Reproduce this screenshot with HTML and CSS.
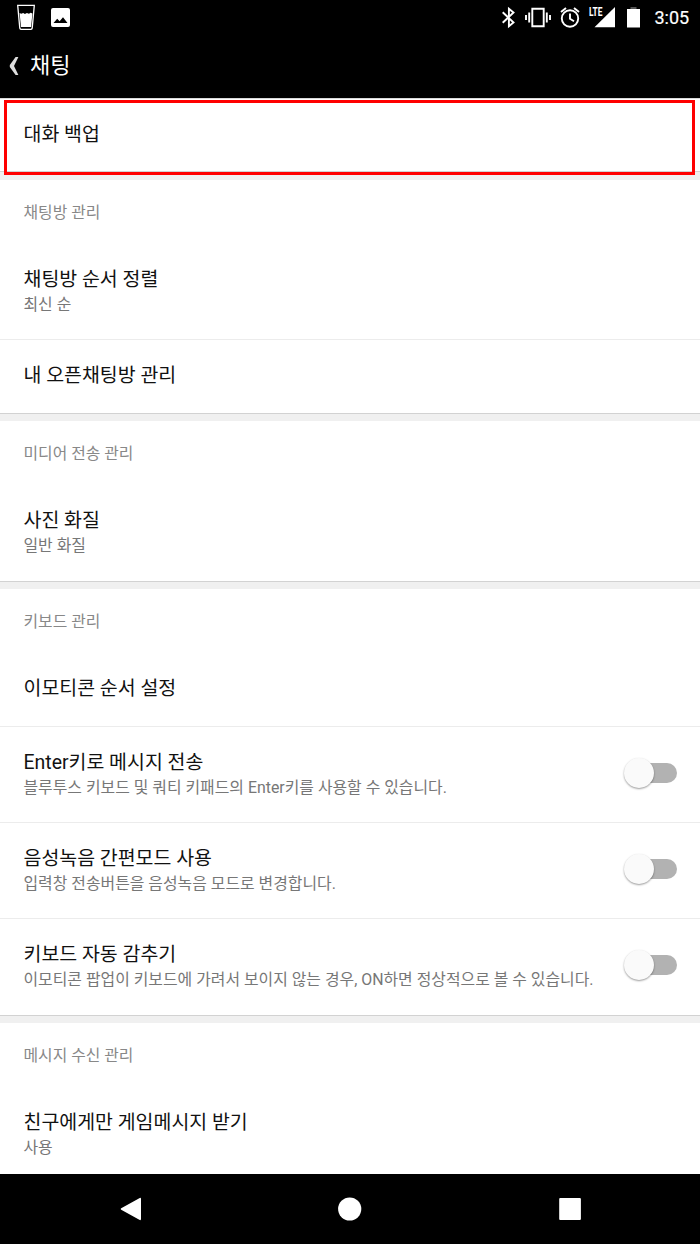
FILE: index.html
```html
<!DOCTYPE html>
<html lang="ko">
<head>
<meta charset="utf-8">
<title>채팅</title>
<link rel="stylesheet" href="styles.css">
</head>
<body>
<div class="screen">
  <header class="top">
    <div class="status">
      <svg class="status-icons" width="80" height="36" viewBox="0 0 80 36">
        <path d="M17.7 5.3H34.3L32.2 28.2Q32 29.3 31 29.3H21Q20 29.3 19.8 28.2Z" fill="none" stroke="#fff" stroke-width="1.3"/>
        <path d="M19.6 13l1.6.8 2-.8 1.7 1 2-1 2 .8 1.8-1 1.7.8L31.1 27H21Z" fill="#fff"/>
        <path fill-rule="evenodd" fill="#fff" d="M53 8H68Q70 8 70 10V25Q70 27 68 27H53Q51 27 51 25V10Q51 8 53 8ZM53.5 23H67.5L63 17.2 59.6 21.2 57.2 18.8Z"/>
      </svg>
      <svg class="status-icons" width="160" height="36" viewBox="490 0 160 36">
        <g fill="none" stroke="#fff" stroke-width="1.9">
          <path d="M502.7 12.2L513.5 22.5 508.9 26.3V8.7L513.5 12.5 502.7 22.8"/>
          <path d="M532.3 8.7H543.7V26.3H532.3ZM529.2 12.5V22.5M526 15V20M546.8 12.5V22.5M550 15V20"/>
          <circle cx="570" cy="18.5" r="8.2"/>
          <path d="M570 13.5V18.8L574 21.2M561 12L566 7.9M579 12L574 7.9"/>
        </g>
        <path d="M594.5 27.3L615 7V27.3Z" fill="#fff"/>
        <path d="M627 9H640V27.5H627Z" fill="#fff"/>
        <path d="M630.5 7H636.5V9H630.5Z" fill="#555"/>
        <text class="lte" x="589" y="15.9" textLength="13.5" lengthAdjust="spacingAndGlyphs">LTE</text>
      </svg>
      <span class="time">3:05</span>
    </div>
    <div class="bar">
      <svg class="back" width="11" height="18" viewBox="0 0 11 18"><path d="M6.6 0H9.4L5 9 9.4 18H6.6L.8 10V8Z" fill="#ddd"/></svg>
      <h1 class="heading">채팅</h1>
    </div>
  </header>
  <main class="content">
    <section class="group first">
      <div class="row backup"><div class="title">대화 백업</div></div>
      <div class="highlight"></div>
    </section>
    <section class="group">
      <h2 class="label">채팅방 관리</h2>
      <div class="row double"><div class="title">채팅방 순서 정렬</div><div class="sub">최신 순</div></div>
      <div class="row single"><div class="title">내 오픈채팅방 관리</div></div>
    </section>
    <section class="group">
      <h2 class="label">미디어 전송 관리</h2>
      <div class="row double"><div class="title">사진 화질</div><div class="sub">일반 화질</div></div>
    </section>
    <section class="group">
      <h2 class="label">키보드 관리</h2>
      <div class="row single"><div class="title">이모티콘 순서 설정</div></div>
      <div class="row double switchable"><div><div class="title">Enter키로 메시지 전송</div><div class="sub">블루투스 키보드 및 쿼티 키패드의 Enter키를 사용할 수 있습니다.</div></div><span class="switch"></span></div>
      <div class="row double switchable"><div><div class="title">음성녹음 간편모드 사용</div><div class="sub">입력창 전송버튼을 음성녹음 모드로 변경합니다.</div></div><span class="switch"></span></div>
      <div class="row double switchable"><div><div class="title">키보드 자동 감추기</div><div class="sub">이모티콘 팝업이 키보드에 가려서 보이지 않는 경우, ON하면 정상적으로 볼 수 있습니다.</div></div><span class="switch"></span></div>
    </section>
    <section class="group">
      <h2 class="label">메시지 수신 관리</h2>
      <div class="row double"><div class="title">친구에게만 게임메시지 받기</div><div class="sub">사용</div></div>
    </section>
  </main>
  <nav class="nav">
    <svg width="24" height="26" viewBox="0 0 24 26"><path d="M20.3 2.2Q22 1.2 22 3V23Q22 24.8 20.3 23.8L2.2 13.8Q1 13 2.2 12.2Z" fill="#fff"/></svg>
    <svg width="24" height="26" viewBox="0 0 24 26"><circle cx="11" cy="13" r="11.6" fill="#fff" transform="translate(-.3 0)" /></svg>
    <svg width="24" height="26" viewBox="0 0 24 26"><rect x="1.2" y="2" width="21.7" height="22" rx="1" fill="#fff"/></svg>
  </nav>
</div>
</body>
</html>
```
FILE: styles.css
```css
* { box-sizing: border-box; }
body {
  margin: 0;
  font-family: Roboto, "Noto Sans CJK KR", sans-serif;
}
.screen {
  width: 700px;
  height: 1244px;
  display: flex;
  flex-direction: column;
  overflow: hidden;
  background: #fff;
}
.top { height: 98px; flex: none; background: #000; color: #fff; }
.status { height: 36px; display: flex; align-items: center; }
.status-icons { display: block; flex: none; }
.status-icons + .status-icons { margin-left: 410px; }
.lte { font: 700 12px Roboto, sans-serif; fill: #fff; }
.time { margin-left: 4.5px; font-size: 18px; font-weight: 400; -webkit-text-stroke: .2px #fff; line-height: 36px; }
.bar { height: 60px; display: flex; align-items: center; padding-left: 9px; }
.back { display: block; }
.heading { margin: 0 0 0 10px; font-size: 22px; font-weight: 400; line-height: 30px; }
.content { height: 1076px; flex: none; overflow: hidden; }
.group { border-bottom: 1px solid #d2d2d2; }
.group + .group { border-top: 7px solid #f0f0f0; }
.first + .group { border-top-width: 8px; }
.first { position: relative; border-top: 1px solid #d8d8d8; }
.highlight {
  position: absolute;
  left: 4px;
  top: 1px;
  width: 691px;
  height: 75px;
  border: 3px solid #f00;
}
.label {
  height: 64px;
  margin: 0;
  padding: 21px 23.5px 0;
  color: #888;
  font-size: 15.85px;
  font-weight: 400;
  line-height: 24px;
}
.row { padding: 23px 23.5px 0; border-bottom: 1px solid #ececec; }
.row:last-of-type { border-bottom: 0; }
.backup { height: 72px; border-bottom: 0; }
.single { height: 74px; }
.single:last-of-type { height: 73px; }
.double { height: 96px; }
.title { color: #111; font-size: 19.45px; line-height: 25px; }
.sub { color: #777; font-size: 15.9px; line-height: 26px; white-space: nowrap; }
.switchable { display: flex; justify-content: space-between; }
.switch {
  flex: none;
  width: 44px;
  height: 20px;
  margin-top: 13px;
  border-radius: 10px;
  background: #b2b2b2;
}
.switch::before {
  content: "";
  display: block;
  width: 30px;
  height: 30px;
  margin: -5px 0 0 -9px;
  border-radius: 50%;
  background: #fafafa;
  box-shadow: 0 1px 2px rgba(0, 0, 0, .4);
}
.nav {
  height: 70px;
  flex: none;
  display: flex;
  justify-content: space-between;
  align-items: center;
  padding: 0 118px 0 119px;
  background: #000;
}
.nav svg { overflow: visible; }
```
